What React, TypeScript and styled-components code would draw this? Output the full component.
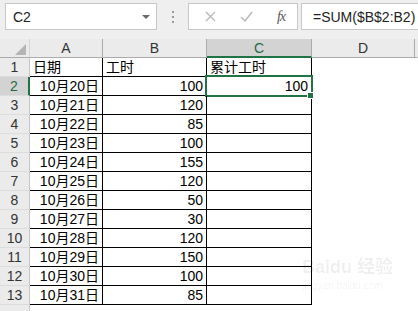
import React from "react";
import styled, { createGlobalStyle } from "styled-components";

const Global = createGlobalStyle`
  html, body { margin: 0; padding: 0; background: #ffffff; overflow: hidden; }
  body { font-family: "Liberation Sans", "Noto Sans CJK SC", sans-serif; }
`;

const Page = styled.div`
  width: 418px;
  height: 311px;
  position: relative;
  overflow: hidden;
  background: #ffffff;
`;

const FormulaBar = styled.div`
  height: 39px;
  box-sizing: border-box;
  padding: 3px 0 0 5px;
  background: #efefef;
  display: flex;
  align-items: flex-start;
`;

const Box = styled.div<{ $w: number }>`
  width: ${(p) => p.$w}px;
  height: 27px;
  box-sizing: border-box;
  background: #ffffff;
  border: 1px solid #c8c8c8;
  display: flex;
  align-items: center;
  flex-shrink: 0;
`;

const NameText = styled.span`
  font-size: 14px;
  color: #222;
  padding-left: 7px;
  flex: 1;
`;

const Caret = styled.span`
  width: 0;
  height: 0;
  border-left: 4px solid transparent;
  border-right: 4px solid transparent;
  border-top: 4px solid #6a6a6a;
  margin-right: 6px;
`;

const Dots = styled.div`
  width: 31px;
  height: 27px;
  display: flex;
  flex-direction: column;
  align-items: center;
  justify-content: center;
  gap: 3px;
  flex-shrink: 0;
  & > i {
    width: 2px;
    height: 2px;
    background: #9a9a9a;
    display: block;
  }
`;

const IconGroup = styled(Box)`
  justify-content: space-between;
  padding: 0 12px 0 16px;
`;

const FxText = styled.span`
  font-family: "Liberation Serif", "DejaVu Serif", serif;
  font-style: italic;
  font-size: 14px;
  color: #555;
  letter-spacing: -1px;
`;

const FormulaBox = styled(Box)`
  flex: 1;
  margin-left: 3px;
  border-right: none;
`;

const FormulaText = styled.span`
  font-size: 14px;
  color: #222;
  padding-left: 11px;
`;

const Sheet = styled.div`
  display: grid;
  grid-template-columns: 30px 73px 104px 105px 103px 1fr;
  grid-auto-rows: 19px;
`;

const Corner = styled.div`
  background: #ebebeb;
  border-right: 1px solid #d6d6d6;
  border-bottom: 1px solid #ababab;
  position: relative;
  &::after {
    content: "";
    position: absolute;
    right: 3px;
    bottom: 2px;
    width: 0;
    height: 0;
    border-left: 11px solid transparent;
    border-bottom: 11px solid #b4b4b4;
  }
`;

const ColHead = styled.div<{ $sel?: boolean; $last?: boolean }>`
  box-sizing: border-box;
  background: ${(p) => (p.$sel ? "#d3d3d3" : "#ebebeb")};
  border-right: 1px solid ${(p) => (p.$last ? "transparent" : "#ababab")};
  border-bottom: ${(p) => (p.$sel ? "2px solid #217346" : "1px solid #ababab")};
  color: ${(p) => (p.$sel ? "#1e6b44" : "#333")};
  font-size: 14px;
  display: flex;
  align-items: center;
  justify-content: center;
  padding-top: ${(p) => (p.$sel ? "1px" : "0")};
`;

const RowHead = styled.div<{ $sel?: boolean }>`
  box-sizing: border-box;
  background: ${(p) => (p.$sel ? "#d3d3d3" : "#ebebeb")};
  border-right: ${(p) => (p.$sel ? "2px solid #217346" : "1px solid #c6c6c6")};
  border-bottom: 1px solid #dcdcdc;
  color: ${(p) => (p.$sel ? "#1e6b44" : "#333")};
  font-size: 14px;
  display: flex;
  align-items: flex-end;
  justify-content: center;
  line-height: 17px;
`;

const Cell = styled.div<{ $align?: "left" | "right"; $sel?: boolean }>`
  box-sizing: border-box;
  border-right: 1px solid #000;
  border-bottom: 1px solid #000;
  font-size: 14px;
  color: #000;
  line-height: 17px;
  display: flex;
  align-items: flex-end;
  justify-content: ${(p) => (p.$align === "right" ? "flex-end" : "flex-start")};
  padding: 0 3px 0 3px;
  white-space: nowrap;
  position: relative;
  ${(p) =>
    p.$sel
      ? `
    &::after {
      content: "";
      position: absolute;
      left: -2px; right: -2px; top: -2px; bottom: -2px;
      border: 2px solid #217346;
      pointer-events: none;
    }
    &::before {
      content: "";
      position: absolute;
      right: -3px; bottom: -4px;
      width: 5px; height: 5px;
      background: #217346;
      border: 1px solid #fff;
      z-index: 2;
    }
  `
      : ""}
`;

const Blank = styled.div``;

const Watermark = styled.div`
  position: absolute;
  left: 302px;
  top: 256px;
  color: rgba(0, 0, 0, 0.07);
  font-family: "Liberation Sans", "Noto Sans CJK SC", sans-serif;
  pointer-events: none;
`;

const WmTop = styled.div`
  font-size: 18px;
  line-height: 22px;
  font-weight: bold;
  white-space: nowrap;
`;

const WmBottom = styled.div`
  font-size: 10px;
  line-height: 12px;
  margin-top: 2px;
  white-space: nowrap;
`;

const data: [string, number][] = [
  ["10月20日", 100],
  ["10月21日", 120],
  ["10月22日", 85],
  ["10月23日", 100],
  ["10月24日", 155],
  ["10月25日", 120],
  ["10月26日", 50],
  ["10月27日", 30],
  ["10月28日", 120],
  ["10月29日", 150],
  ["10月30日", 100],
  ["10月31日", 85],
];

export default function App() {
  return (
    <Page>
      <Global />
      <FormulaBar>
        <Box $w={152}>
          <NameText>C2</NameText>
          <Caret />
        </Box>
        <Dots>
          <i />
          <i />
          <i />
        </Dots>
        <IconGroup $w={110}>
          <svg width="11" height="11" viewBox="0 0 11 11">
            <path d="M1 1 L10 10 M10 1 L1 10" stroke="#b8b8b8" strokeWidth="1.4" fill="none" />
          </svg>
          <svg width="13" height="11" viewBox="0 0 13 11">
            <path d="M1 6 L5 10 L12 1" stroke="#b8b8b8" strokeWidth="1.4" fill="none" />
          </svg>
          <FxText>fx</FxText>
        </IconGroup>
        <FormulaBox $w={0}>
          <FormulaText>=SUM($B$2:B2)</FormulaText>
        </FormulaBox>
      </FormulaBar>
      <Sheet>
        <Corner />
        <ColHead>A</ColHead>
        <ColHead>B</ColHead>
        <ColHead $sel>C</ColHead>
        <ColHead>D</ColHead>
        <ColHead $last />

        <RowHead>1</RowHead>
        <Cell>日期</Cell>
        <Cell>工时</Cell>
        <Cell>累计工时</Cell>
        <Blank />
        <Blank />

        {data.map(([d, h], i) => (
          <React.Fragment key={d}>
            <RowHead $sel={i === 0}>{i + 2}</RowHead>
            <Cell $align="right">{d}</Cell>
            <Cell $align="right">{h}</Cell>
            <Cell $align="right" $sel={i === 0}>
              {i === 0 ? "100" : ""}
            </Cell>
            <Blank />
            <Blank />
          </React.Fragment>
        ))}
        <RowHead />
      </Sheet>
      <Watermark>
        <WmTop>Baidu 经验</WmTop>
        <WmBottom>jingyan.baidu.com</WmBottom>
      </Watermark>
    </Page>
  );
}
